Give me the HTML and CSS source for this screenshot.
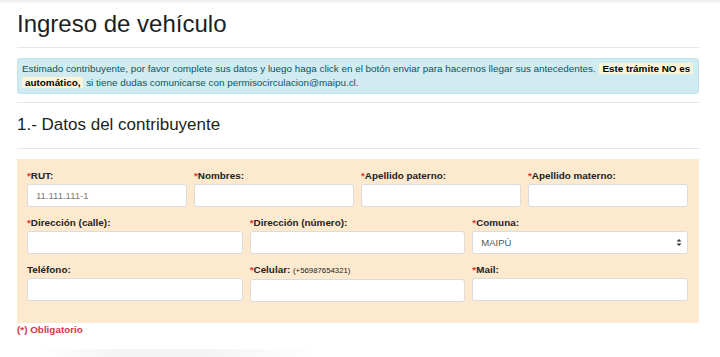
FILE: index.html
```html
<!DOCTYPE html>
<html lang="es">
<head>
  <meta charset="UTF-8" />
  <meta name="viewport" content="width=device-width, initial-scale=1.0"/>
  <title>Ingreso de vehículo</title>
  <link rel="stylesheet" href="styles.css">
</head>
<body>
  <div class="top-shade"></div>

  <main class="container">
    <h1>Ingreso de vehículo</h1>
    <hr>

    <div class="alert">
      <span>Estimado contribuyente, por favor complete sus datos y luego haga click en el botón enviar para hacernos llegar sus antecedentes.</span>
      <mark>Este trámite NO es</mark><br><mark class="first">automático,</mark>
      <span>si tiene dudas comunicarse con permisocirculacion@maipu.cl.</span>
    </div>
    <hr>

    <h2>1.- Datos del contribuyente</h2>
    <hr class="hr-section">

    <form class="form-box">
      <div class="form-row cols-4">
        <div class="field">
          <label><span class="req">*</span>RUT:</label>
          <input type="text" placeholder="11.111.111-1">
        </div>
        <div class="field">
          <label><span class="req">*</span>Nombres:</label>
          <input type="text">
        </div>
        <div class="field">
          <label><span class="req">*</span>Apellido paterno:</label>
          <input type="text">
        </div>
        <div class="field">
          <label><span class="req">*</span>Apellido materno:</label>
          <input type="text">
        </div>
      </div>

      <div class="form-row cols-3">
        <div class="field">
          <label><span class="req">*</span>Dirección (calle):</label>
          <input type="text">
        </div>
        <div class="field">
          <label><span class="req">*</span>Dirección (número):</label>
          <input type="text">
        </div>
        <div class="field">
          <label><span class="req">*</span>Comuna:</label>
          <div class="select-wrap">
            <select>
              <option>MAIPÚ</option>
            </select>
            <svg class="select-arrow" width="6" height="9" viewBox="0 0 6 9">
              <path d="M0.5 3.5 L3 1 L5.5 3.5 Z M0.5 5.5 L3 8 L5.5 5.5 Z" fill="#333"/>
            </svg>
          </div>
        </div>
      </div>

      <div class="form-row cols-3">
        <div class="field">
          <label>Teléfono:</label>
          <input type="text">
        </div>
        <div class="field">
          <label><span class="req">*</span>Celular: <small>(+56987654321)</small></label>
          <input type="text">
        </div>
        <div class="field">
          <label><span class="req">*</span>Mail:</label>
          <input type="text">
        </div>
      </div>
    </form>

    <p class="required-note">(*) Obligatorio</p>

    <div class="next-card"></div>
  </main>
</body>
</html>
```

FILE: styles.css
```css
body {
  margin: 0;
  font-family: "Liberation Sans", Arial, sans-serif;
  color: #212529;
  background: #fff;
  overflow: hidden;
}

.top-shade {
  height: 4px;
  background: linear-gradient(to bottom, #ececec, #fff);
}

.container {
  padding: 0 21px 0 17px;
}

h1 {
  font-size: 24px;
  font-weight: 400;
  margin: 5px 0 0;
  line-height: 30px;
  color: #1d1f22;
}

h2 {
  font-size: 17px;
  font-weight: 400;
  margin: 0;
  line-height: 24px;
  color: #1d1f22;
}

hr {
  border: none;
  border-top: 1px solid #e6e6e6;
  margin: 8px 0 10px;
}

.hr-section {
  margin-top: 11px;
}

.alert {
  background: #d1ecf1;
  border: 1px solid #bee5eb;
  border-radius: 3px;
  color: #0c5460;
  font-size: 9.9px;
  line-height: 14px;
  padding: 3px 2px 3px 4px;
}

.alert mark {
  background: #fcf3d8;
  color: #000;
  font-weight: 700;
  padding: 0 3px;
  margin-left: 1px;
  white-space: nowrap;
}

.alert mark.first {
  margin-left: 0;
}

.form-box {
  background: #fde9cd;
  padding: 11px 11px 21px 10px;
}

.form-row {
  display: grid;
  gap: 7px;
  margin-bottom: 10px;
}

.form-row:last-child {
  margin-bottom: 0;
}

.cols-4 {
  grid-template-columns: repeat(4, 1fr);
}

.cols-3 {
  grid-template-columns: repeat(3, 1fr);
}

.field label {
  display: block;
  font-size: 9.9px;
  font-weight: 700;
  line-height: 12px;
  margin-bottom: 2px;
  color: #222;
}

.field label small {
  font-size: 7.8px;
  font-weight: 400;
}

.req {
  color: #e3342f;
}

.field input,
.field select {
  display: block;
  box-sizing: border-box;
  width: 100%;
  height: 23px;
  border: 1px solid #dcdcdc;
  border-radius: 3px;
  background: #fff;
  font-family: "Liberation Sans", Arial, sans-serif;
  font-size: 9.5px;
  color: #555;
  padding: 0 8px;
  margin: 0;
}

.field input::placeholder {
  color: #7a7a7a;
}

.select-wrap {
  position: relative;
}

.field select {
  appearance: none;
  -webkit-appearance: none;
}

.select-arrow {
  position: absolute;
  right: 6px;
  top: 7px;
}

.required-note {
  color: #dc3545;
  font-size: 9.9px;
  line-height: 12px;
  font-weight: 700;
  margin: 1px 0 0;
}

.next-card {
  margin: 13px 0 0 20px;
  height: 12px;
  width: 280px;
  background: linear-gradient(to right, #fff, #f4f4f4 30%, #f4f4f4 60%, #fff);
}
```
